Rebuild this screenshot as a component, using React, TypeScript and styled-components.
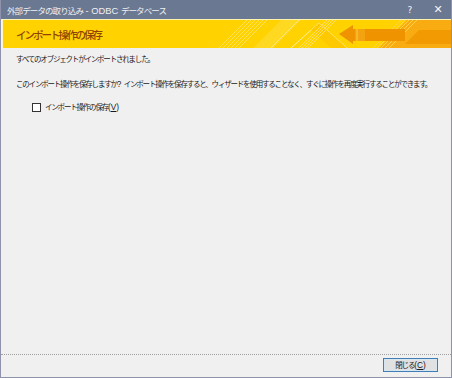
import React, { useState } from 'react';
import styled, { createGlobalStyle } from 'styled-components';

const GlobalStyle = createGlobalStyle`
  html, body {
    margin: 0;
    padding: 0;
    background: #f0f0f0;
  }
  body {
    font-family: "Noto Sans CJK JP", "Noto Sans", sans-serif;
  }
`;

const Window = styled.div`
  width: 452px;
  height: 378px;
  box-sizing: border-box;
  display: flex;
  flex-direction: column;
  border: 1px solid #8e93ab;
  border-top: none;
  background: #f0f0f0;
  overflow: hidden;
`;

const TitleBar = styled.div`
  height: 19px;
  margin: 0 -1px;
  display: flex;
  align-items: center;
  background: #6b7891;
  color: #eef0f4;
  font-size: 8.5px;
  letter-spacing: -0.9px;
  padding-left: 7px;
`;

const TitleText = styled.span`
  flex: 1;
`;

// half-width text keeps its natural spacing
const Latin = styled.span`
  font-family: "Liberation Sans", sans-serif;
  font-size: 1.1em;
  letter-spacing: 0;
  white-space: pre;
`;

const TitleButton = styled.span<{ $size: number }>`
  width: 28px;
  text-align: center;
  font-family: "DejaVu Sans", sans-serif;
  font-size: ${({ $size }) => $size}px;
  letter-spacing: 0;
  color: #f4f5f8;
`;

const Banner = styled.div`
  position: relative;
  height: 29px;
  display: flex;
  align-items: center;
  background: #ffd200;
  border-top: 1px solid #fff3b0;
  box-sizing: border-box;
  overflow: hidden;
`;

const BannerArt = styled.svg`
  position: absolute;
  top: 0;
  left: 0;
`;

const BannerTitle = styled.h1`
  position: relative;
  margin: 0 0 0 15px;
  font-size: 10.5px;
  font-weight: 500;
  letter-spacing: -2px;
  color: #8f4306;
`;

const Content = styled.div`
  flex: 1;
  padding: 5px 15px 0;
  font-size: 7.5px;
  letter-spacing: -1.2px;
  color: #1a1a1a;
`;

const Line = styled.p<{ $gap: number }>`
  margin: ${({ $gap }) => $gap}px 0 0;
  line-height: 12px;
  white-space: nowrap;
`;

const CheckRow = styled.label`
  margin: 10px 0 0 16px;
  display: flex;
  align-items: center;
  gap: 4px;
  line-height: 12px;
  cursor: default;
`;

const Box = styled.span<{ $checked: boolean }>`
  width: 7px;
  height: 7px;
  border: 1px solid #333;
  background: #fff;
  display: flex;
  align-items: center;
  justify-content: center;
  font-size: 7px;
  letter-spacing: 0;
`;

const Footer = styled.div`
  border-top: 1px dotted #a0a0a0;
  display: flex;
  justify-content: flex-end;
  padding: 3px 13px 5px;
`;

const Button = styled.button`
  width: 55px;
  height: 14px;
  padding: 0;
  box-sizing: border-box;
  border: 1px solid #3f7fb5;
  box-shadow: inset 0 0 0 1px #d8e6f2;
  background: #e1e1e1;
  font-family: "Noto Sans CJK JP", sans-serif;
  font-size: 7.5px;
  letter-spacing: -1.1px;
  color: #1a1a1a;
  line-height: 12px;
`;

const App: React.FC = () => {
  const [checked, setChecked] = useState(false);

  return (
    <>
      <GlobalStyle />
      <Window>
        <TitleBar>
          <TitleText>
            外部データの取り込み<Latin> - ODBC </Latin>データベース
          </TitleText>
          <TitleButton $size={9}>?</TitleButton>
          <TitleButton $size={11}>✕</TitleButton>
        </TitleBar>

        <Banner>
          <BannerArt width="452" height="28" viewBox="0 0 452 28">
            <rect x="0" y="0" width="2" height="28" fill="#fff6c8" />
            {[0, 4, 8, 12, 16, 20].map((d) => (
              <line key={d} x1={218 + d} y1="28" x2={246 + d} y2="0" stroke="#ffe35c" strokeWidth="1" />
            ))}
            <polygon points="252,28 280,0 300,0 272,28" fill="#ffda2a" opacity="0.8" />
            <polyline points="270,28 298,0" stroke="#ffe680" strokeWidth="1" fill="none" />
            <polyline points="290,28 318,3 346,28" stroke="#fff0a0" strokeWidth="1" fill="none" />
            <polygon points="318,3 346,28 330,28 310,10" fill="#ffc400" opacity="0.7" />
            {[0, 3, 6, 9].map((d) => (
              <line key={d} x1={298 + d} y1="28" x2={326 + d} y2="0" stroke="#ffe066" strokeWidth="1" />
            ))}
            <polygon points="378,28 406,0 452,0 452,28" fill="#f8ac12" />
            {[0, 4, 8, 12, 16].map((d) => (
              <line key={d} x1={372 + d} y1="28" x2={400 + d} y2="0" stroke="#ffd24a" strokeWidth="1" />
            ))}
            <polygon points="338,14 352,5 352,9 404,9 404,21 352,21 352,24" fill="#ef9400" />
            <polygon points="354,9 364,9 364,21 354,21" fill="#f4a310" />
            <line x1="356" y1="9" x2="356" y2="21" stroke="#ffc840" strokeWidth="1" />
            <polygon points="404,24 418,10 452,10 452,24" fill="#f29a02" />
          </BannerArt>
          <BannerTitle>インポート操作の保存</BannerTitle>
        </Banner>

        <Content>
          <Line $gap={0}>すべてのオブジェクトがインポートされました。</Line>
          <Line $gap={13}>
            このインポート操作を保存しますか<Latin>? </Latin>インポート操作を保存すると、ウィザードを使用することなく、すぐに操作を再度実行することができます。
          </Line>
          <CheckRow onClick={() => setChecked(!checked)}>
            <Box $checked={checked}>{checked ? '✓' : ''}</Box>
            <span>
              インポート操作の保存
              <Latin>
                (<u>V</u>)
              </Latin>
            </span>
          </CheckRow>
        </Content>

        <Footer>
          <Button>
            閉じる
            <Latin>
              (<u>C</u>)
            </Latin>
          </Button>
        </Footer>
      </Window>
    </>
  );
};

export default App;
